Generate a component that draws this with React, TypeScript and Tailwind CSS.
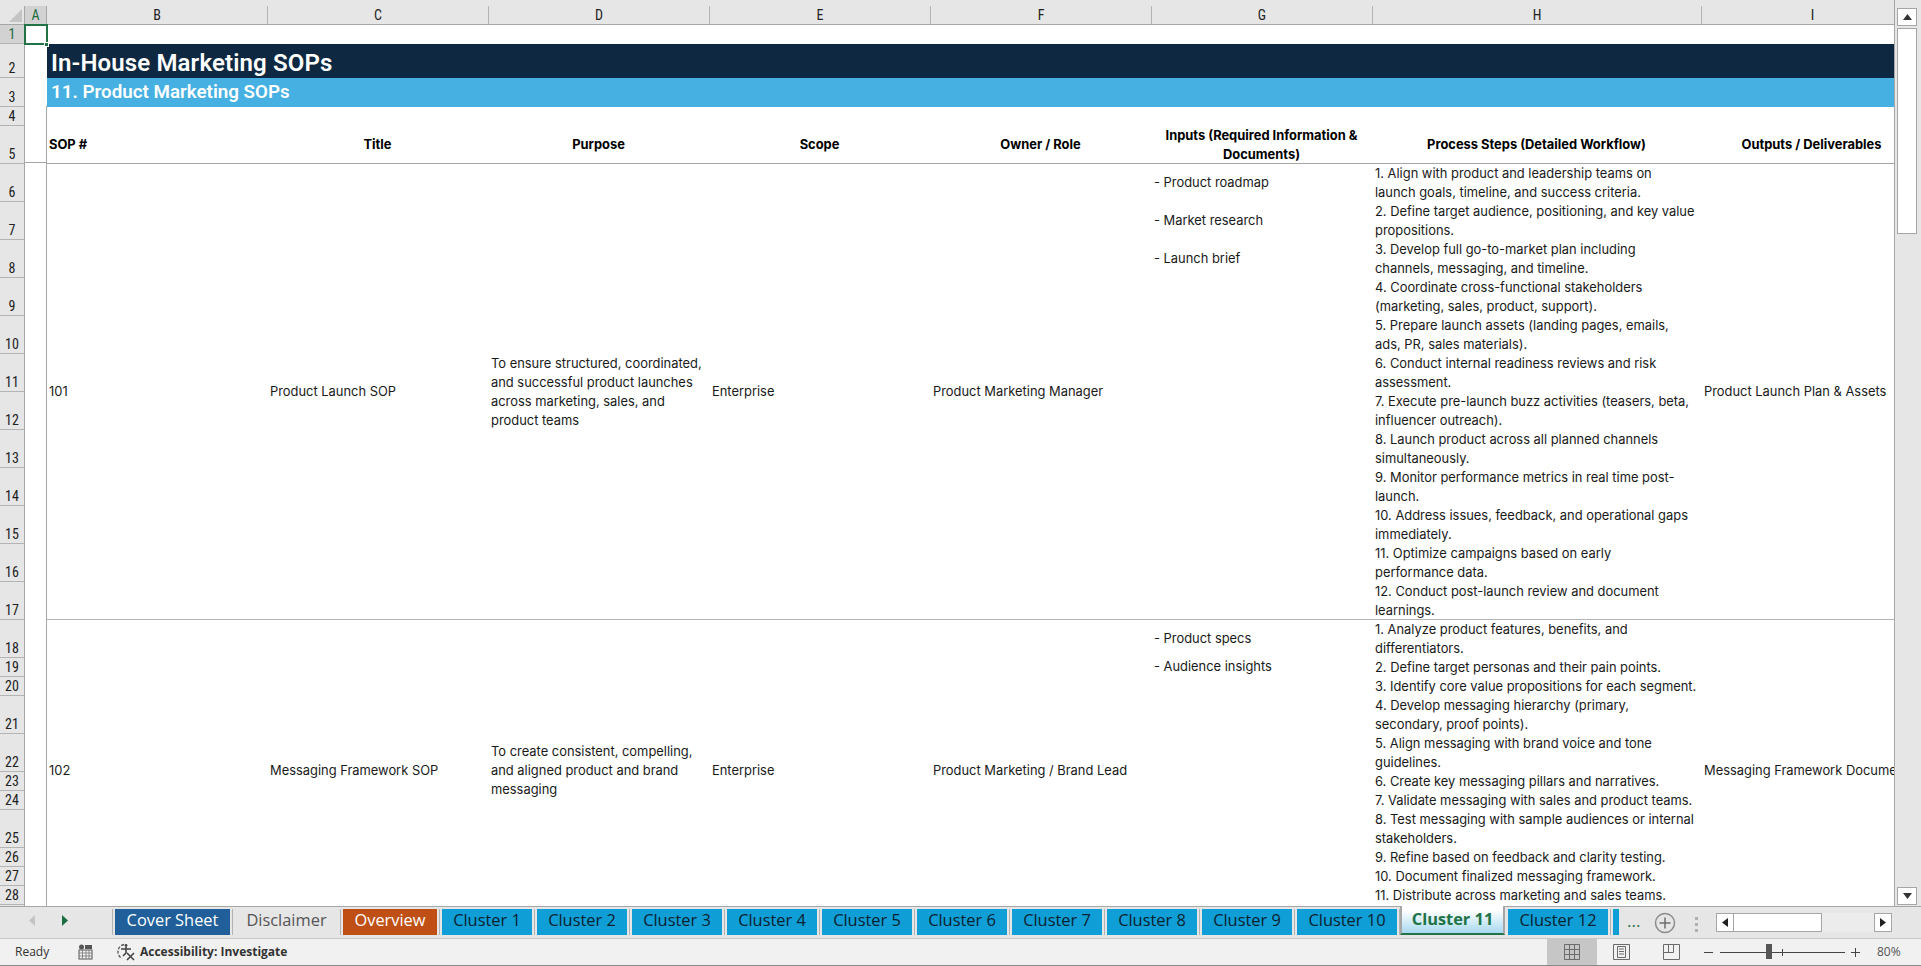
import React from "react";

const BODY = "font-['Inter','Liberation_Sans',sans-serif]";
const HEADF = "font-['Liberation_Sans_Narrow','Roboto_Condensed','Roboto',sans-serif]";

const ColHead = [
  { l: "B", w: "w-[221px]" },
  { l: "C", w: "w-[221px]" },
  { l: "D", w: "w-[221px]" },
  { l: "E", w: "w-[221px]" },
  { l: "F", w: "w-[221px]" },
  { l: "G", w: "w-[221px]" },
  { l: "H", w: "w-[329px]" },
  { l: "I", w: "w-[221px]" },
];

const rowHeads: { n: number; h: string }[] = [
  { n: 1, h: "h-[19px]" },
  { n: 2, h: "h-[34px]" },
  { n: 3, h: "h-[29px]" },
  { n: 4, h: "h-[19px]" },
  { n: 5, h: "h-[38px]" },
  ...[6, 7, 8, 9, 10, 11, 12, 13, 14, 15, 16, 17].map((n) => ({ n, h: "h-[38px]" })),
  { n: 18, h: "h-[38px]" },
  { n: 19, h: "h-[19px]" },
  { n: 20, h: "h-[19px]" },
  { n: 21, h: "h-[38px]" },
  { n: 22, h: "h-[38px]" },
  { n: 23, h: "h-[19px]" },
  { n: 24, h: "h-[19px]" },
  { n: 25, h: "h-[38px]" },
  { n: 26, h: "h-[19px]" },
  { n: 27, h: "h-[19px]" },
  { n: 28, h: "h-[19px]" },
];

const steps1 = [
  "1. Align with product and leadership teams on",
  "launch goals, timeline, and success criteria.",
  "2. Define target audience, positioning, and key value",
  "propositions.",
  "3. Develop full go-to-market plan including",
  "channels, messaging, and timeline.",
  "4. Coordinate cross-functional stakeholders",
  "(marketing, sales, product, support).",
  "5. Prepare launch assets (landing pages, emails,",
  "ads, PR, sales materials).",
  "6. Conduct internal readiness reviews and risk",
  "assessment.",
  "7. Execute pre-launch buzz activities (teasers, beta,",
  "influencer outreach).",
  "8. Launch product across all planned channels",
  "simultaneously.",
  "9. Monitor performance metrics in real time post-",
  "launch.",
  "10. Address issues, feedback, and operational gaps",
  "immediately.",
  "11. Optimize campaigns based on early",
  "performance data.",
  "12. Conduct post-launch review and document",
  "learnings.",
];

const steps2 = [
  "1. Analyze product features, benefits, and",
  "differentiators.",
  "2. Define target personas and their pain points.",
  "3. Identify core value propositions for each segment.",
  "4. Develop messaging hierarchy (primary,",
  "secondary, proof points).",
  "5. Align messaging with brand voice and tone",
  "guidelines.",
  "6. Create key messaging pillars and narratives.",
  "7. Validate messaging with sales and product teams.",
  "8. Test messaging with sample audiences or internal",
  "stakeholders.",
  "9. Refine based on feedback and clarity testing.",
  "10. Document finalized messaging framework.",
  "11. Distribute across marketing and sales teams.",
];

function Cell({ w, children, center }: { w: string; children?: React.ReactNode; center?: boolean }) {
  return (
    <div className={`${w} shrink-0 flex items-center overflow-hidden ${center ? "pr-[2px] justify-center text-center" : "pl-[2px]"}`}>
      <div className="whitespace-pre">{children}</div>
    </div>
  );
}

function Record({
  h,
  no,
  title,
  purpose,
  owner,
  output,
  inputs,
  steps,
}: {
  h: string;
  no: string;
  title: string;
  purpose: string;
  owner: string;
  output: string;
  inputs: { t: string; h: string }[];
  steps: string[];
}) {
  return (
    <div className={`${h} flex shrink-0 border-b border-[#b4b4b4] text-[12.9px] leading-[19px] text-[#1a1a1a] ${BODY}`}>
      <Cell w="w-[221px]">{no}</Cell>
      <Cell w="w-[221px]">{title}</Cell>
      <Cell w="w-[221px]">{purpose}</Cell>
      <Cell w="w-[221px]">Enterprise</Cell>
      <Cell w="w-[221px]">{owner}</Cell>
      <div className="w-[221px] shrink-0 pl-[2px] flex flex-col">
        {inputs.map((i) => (
          <div key={i.t} className={`${i.h} pb-[2px] flex items-center`}>
            {i.t}
          </div>
        ))}
      </div>
      <div className="w-[329px] shrink-0 pl-[2px] whitespace-nowrap overflow-hidden">
        {steps.map((s) => (
          <div key={s} className="h-[19px]">
            {s}
          </div>
        ))}
      </div>
      <Cell w="w-[221px]">{output}</Cell>
    </div>
  );
}

function Tab({ label, w, cls }: { label: string; w: string; cls: string }) {
  return (
    <>
      <div className={`${w} h-[26px] pb-[4px] shrink-0 flex items-center justify-center text-[16.4px] ${cls}`}>{label}</div>
      <div className="w-[1px] h-[26px] mx-[2px] shrink-0 bg-[#b3b3b3]" />
    </>
  );
}

export default function App() {
  return (
    <div className={`w-[1921px] h-[966px] flex flex-col overflow-hidden bg-[#e6e6e6] ${BODY}`}>
      {/* sheet + scroll bar */}
      <div className="h-[906px] flex shrink-0">
        <div className="w-[1895px] shrink-0 flex flex-col relative border-r border-[#a6a6a6]">
          {/* column header */}
          <div className={`h-[25px] pt-[6px] flex shrink-0 overflow-hidden bg-[#e6e6e6] border-b border-[#a6a6a6] text-[14px] leading-[19px] text-[#222] ${HEADF}`}>
            <div className="w-[25px] shrink-0 relative border-r border-[#a6a6a6]">
              <svg width="13" height="13" viewBox="0 0 13 13" className="absolute right-[2px] bottom-[2px]">
                <path d="M13 0 L13 13 L0 13 Z" fill="#c4c4c4" />
              </svg>
            </div>
            <div className="w-[22px] shrink-0 bg-[#d2d2d2] text-center text-[#1e6b41] border-r border-[#a6a6a6]">A</div>
            {ColHead.map((c) => (
              <div key={c.l} className={`${c.w} shrink-0 text-center border-r border-[#b4b4b4] last:border-r-0`}>
                {c.l}
              </div>
            ))}
          </div>

          <div className="flex-1 min-h-0 flex overflow-hidden">
            {/* row headers */}
            <div className={`w-[25px] shrink-0 flex flex-col bg-[#e6e6e6] border-r border-[#a6a6a6] text-[14px] leading-[18px] text-[#222] ${HEADF}`}>
              {rowHeads.map((r) => (
                <div
                  key={r.n}
                  className={`${r.h} shrink-0 flex items-end justify-center border-b border-[#b4b4b4] ${r.n === 1 ? "bg-[#d2d2d2] text-[#1e6b41]" : ""}`}
                >
                  {r.n}
                </div>
              ))}
            </div>
            {/* column A */}
            <div className="w-[22px] shrink-0 flex flex-col bg-white">
              <div className="h-[81px] shrink-0" />
              <div className="h-[19px] shrink-0 border-r border-[#a6a6a6]" />
              <div className="h-[38px] shrink-0 border-r border-b border-[#a6a6a6]" />
              <div className="flex-1 border-r border-[#a6a6a6]" />
            </div>
            {/* body */}
            <div className="flex-1 min-w-0 flex flex-col overflow-hidden bg-white">
              <div className="h-[19px] shrink-0" />
              <div className="h-[34px] shrink-0 bg-[#0e2841] flex items-center pl-[4px] pt-[4px] font-['Roboto',sans-serif] text-[24px] tracking-[0.13px] font-semibold text-white">
                In-House Marketing SOPs
              </div>
              <div className="h-[29px] shrink-0 bg-[#45b0e1] flex items-center pl-[4px] font-['Roboto',sans-serif] text-[18.8px] font-semibold text-white">
                11. Product Marketing SOPs
              </div>
              <div className="h-[19px] shrink-0" />
              <div className="h-[38px] shrink-0 flex border-b border-[#a6a6a6] text-[12.9px] leading-[19px] font-bold text-black">
                <Cell w="w-[221px]">SOP #</Cell>
                <Cell w="w-[221px]" center>Title</Cell>
                <Cell w="w-[221px]" center>Purpose</Cell>
                <Cell w="w-[221px]" center>Scope</Cell>
                <Cell w="w-[221px]" center>Owner / Role</Cell>
                <Cell w="w-[221px]" center>{"Inputs (Required Information &\nDocuments)"}</Cell>
                <Cell w="w-[329px]" center>Process Steps (Detailed Workflow)</Cell>
                <Cell w="w-[221px]" center>Outputs / Deliverables</Cell>
              </div>
              <Record
                h="h-[456px]"
                no="101"
                title="Product Launch SOP"
                purpose={"To ensure structured, coordinated,\nand successful product launches\nacross marketing, sales, and\nproduct teams"}
                owner="Product Marketing Manager"
                output="Product Launch Plan & Assets"
                inputs={[
                  { t: "- Product roadmap", h: "h-[38px]" },
                  { t: "- Market research", h: "h-[38px]" },
                  { t: "- Launch brief", h: "h-[38px]" },
                ]}
                steps={steps1}
              />
              <Record
                h="h-[302px]"
                no="102"
                title="Messaging Framework SOP"
                purpose={"To create consistent, compelling,\nand aligned product and brand\nmessaging"}
                owner="Product Marketing / Brand Lead"
                output="Messaging Framework Document"
                inputs={[
                  { t: "- Product specs", h: "h-[38px]" },
                  { t: "- Audience insights", h: "h-[19px]" },
                ]}
                steps={steps2}
              />
            </div>
          </div>

          {/* active cell */}
          <div className="absolute left-[24px] top-[24px] w-[24px] h-[21px] border-2 border-[#217346]" />
          <div className="absolute left-[44px] top-[42px] w-[5px] h-[5px] bg-[#217346] border border-white" />
        </div>

        {/* vertical scroll bar */}
        <div className="flex-1 flex flex-col pt-[8px] pl-[2px] pr-[4px] pb-[1px]">
          <div className="h-[18px] shrink-0 border border-[#a6a6a6] bg-white flex items-center justify-center">
            <svg width="9" height="6" viewBox="0 0 9 6"><path d="M4.5 0 9 6H0Z" fill="#333" /></svg>
          </div>
          <div className="h-[206px] mt-[2px] shrink-0 border border-[#a6a6a6] bg-white" />
          <div className="flex-1" />
          <div className="h-[18px] shrink-0 border border-[#a6a6a6] bg-white flex items-center justify-center">
            <svg width="9" height="6" viewBox="0 0 9 6"><path d="M0 0H9L4.5 6Z" fill="#333" /></svg>
          </div>
        </div>
      </div>

      {/* tab strip */}
      <div className="h-[33px] shrink-0 flex items-start bg-[#e6e6e6] border-t border-[#a6a6a6] border-b border-b-[#c8c8c8] font-['Open_Sans',sans-serif]">
        <div className="w-[112px] h-[28px] pt-[8px] shrink-0 flex gap-[27px] pl-[29px]">
          <svg width="6" height="11" viewBox="0 0 6 11"><path d="M6 0V11L0 5.5Z" fill="#c4c4c4" /></svg>
          <svg width="6" height="11" viewBox="0 0 6 11"><path d="M0 0V11L6 5.5Z" fill="#1f6e43" /></svg>
        </div>
        <div className="flex items-center mt-[2px]">
          <div className="w-[1px] h-[26px] mr-[2px] bg-[#b3b3b3]" />
          <Tab label="Cover Sheet" w="w-[115px]" cls="bg-[#215f9a] text-white" />
          <Tab label="Disclaimer" w="w-[103px]" cls="text-[#555]" />
          <Tab label="Overview" w="w-[94px]" cls="bg-[#c04f15] text-white" />
          {[1, 2, 3, 4, 5, 6, 7, 8, 9].map((n) => (
            <Tab key={n} label={`Cluster ${n}`} w="w-[90px]" cls="bg-[#0f9ed5] text-[#0b2230]" />
          ))}
          <Tab label="Cluster 10" w="w-[100px]" cls="bg-[#0f9ed5] text-[#0b2230]" />
        </div>
        <div className="w-[105px] h-[29px] -mt-[1px] -ml-[2px] pb-[1px] shrink-0 flex items-center justify-center bg-gradient-to-b from-white via-white via-[15%] to-[#a6d9f0] border-x-2 border-[#a6a6a6] border-b-2 border-b-[#217346] text-[16.4px] font-bold text-[#217346]">
          Cluster 11
        </div>
        <div className="flex items-center mt-[2px] ml-[3px]">
          <Tab label="Cluster 12" w="w-[100px]" cls="bg-[#0f9ed5] text-[#0b2230]" />
          <div className="w-[6px] h-[26px] bg-[#0f9ed5]" />
        </div>
        <div className="ml-[8px] mt-[4px] w-[20px] text-[17px] leading-[20px] text-[#1f6e43]">...</div>
        <svg width="22" height="22" viewBox="0 0 22 22" className="ml-[7px] mt-[5px] shrink-0">
          <circle cx="11" cy="11" r="9.5" fill="none" stroke="#8c8c8c" strokeWidth="1.5" />
          <path d="M11 5.5v11M5.5 11h11" stroke="#6e6e6e" strokeWidth="1.5" />
        </svg>
        <div className="ml-[19px] mt-[10px] flex flex-col gap-[3px] shrink-0">
          <div className="w-[3px] h-[3px] bg-[#b0b0b0]" />
          <div className="w-[3px] h-[3px] bg-[#b0b0b0]" />
          <div className="w-[3px] h-[3px] bg-[#b0b0b0]" />
        </div>
        <div className="ml-[18px] mt-[6px] w-[176px] h-[19px] shrink-0 flex bg-[#ececec]">
          <div className="w-[18px] border border-[#a6a6a6] bg-white flex items-center justify-center">
            <svg width="6" height="9" viewBox="0 0 6 9"><path d="M6 0V9L0 4.5Z" fill="#222" /></svg>
          </div>
          <div className="w-[88px] border-y border-r border-[#a6a6a6] bg-white" />
          <div className="flex-1" />
          <div className="w-[18px] border border-[#a6a6a6] bg-white flex items-center justify-center">
            <svg width="6" height="9" viewBox="0 0 6 9"><path d="M0 0V9L6 4.5Z" fill="#222" /></svg>
          </div>
        </div>
      </div>

      {/* status bar */}
      <div className="flex-1 flex items-center bg-[#f1f1f1] font-['Open_Sans',sans-serif] text-[12px] text-[#333] border-b border-[#8a8a8a]">
        <span className="ml-[15px] w-[63px] shrink-0">Ready</span>
        <svg width="15" height="16" viewBox="0 0 15 16" className="shrink-0">
          <circle cx="3.5" cy="3" r="2.5" fill="#555" />
          <rect x="7" y="1" width="7" height="4" fill="#555" />
          <rect x="1" y="6" width="13" height="9" fill="none" stroke="#555" />
          <path d="M1 9h13M1 12h13M4.5 6v9M8 6v9M11 6v9" stroke="#777" strokeWidth="0.8" />
        </svg>
        <svg width="20" height="20" viewBox="0 0 20 20" className="ml-[23px] shrink-0">
          <path d="M8 2.5A7.5 7.5 0 0 0 6 16.5" fill="none" stroke="#555" strokeWidth="1.3" strokeDasharray="3 1.5" />
          <circle cx="10" cy="3.5" r="1.4" fill="#444" />
          <path d="M5 7h10M10 5v6M10 11l-3 3M11 11l7 7M18 11l-7 7" fill="none" stroke="#444" strokeWidth="1.6" />
        </svg>
        <span className="ml-[4px] font-bold text-[12px] text-[#333] shrink-0">Accessibility: Investigate</span>
        <div className="flex-1" />
        <div className="w-[50px] h-full shrink-0 bg-[#c6c6c6] flex items-center justify-center">
          <svg width="16" height="16" viewBox="0 0 16 16">
            <path d="M.5.5h15v15H.5zM5.5.5v15M10.5.5v15M.5 5.5h15M.5 10.5h15" fill="none" stroke="#6b6b6b" />
          </svg>
        </div>
        <div className="w-[49px] shrink-0 flex justify-center">
          <svg width="17" height="16" viewBox="0 0 17 16">
            <path d="M.5.5h16v15H.5z" fill="none" stroke="#6b6b6b" />
            <path d="M4.5 2.5h8v11h-8zM6 5h5M6 7.5h5M6 10h5" fill="none" stroke="#6b6b6b" />
          </svg>
        </div>
        <div className="w-[51px] shrink-0 flex justify-center">
          <svg width="17" height="16" viewBox="0 0 17 16">
            <path d="M.5.5h16v15H.5zM5.5.5v8M10.5.5v8M.5 8.5h10" fill="none" stroke="#6b6b6b" />
          </svg>
        </div>
        <div className="w-[9px] h-[1px] ml-[7px] shrink-0 bg-[#444]" />
        <div className="ml-[7px] w-[125px] h-[12px] shrink-0 relative flex items-center">
          <div className="w-full h-[1px] bg-[#444]" />
          <div className="absolute left-[46px] top-[-2px] w-[6px] h-[15px] bg-[#555]" />
          <div className="absolute left-[62px] top-[3px] w-[1px] h-[7px] bg-[#444]" />
        </div>
        <svg width="9" height="9" viewBox="0 0 9 9" className="ml-[6px] shrink-0">
          <path d="M0 4.5h9M4.5 0v9" stroke="#444" />
        </svg>
        <span className="ml-[17px] w-[24px] shrink-0 text-[#555]">80%</span>
        <div className="w-[20px] shrink-0" />
      </div>
    </div>
  );
}
